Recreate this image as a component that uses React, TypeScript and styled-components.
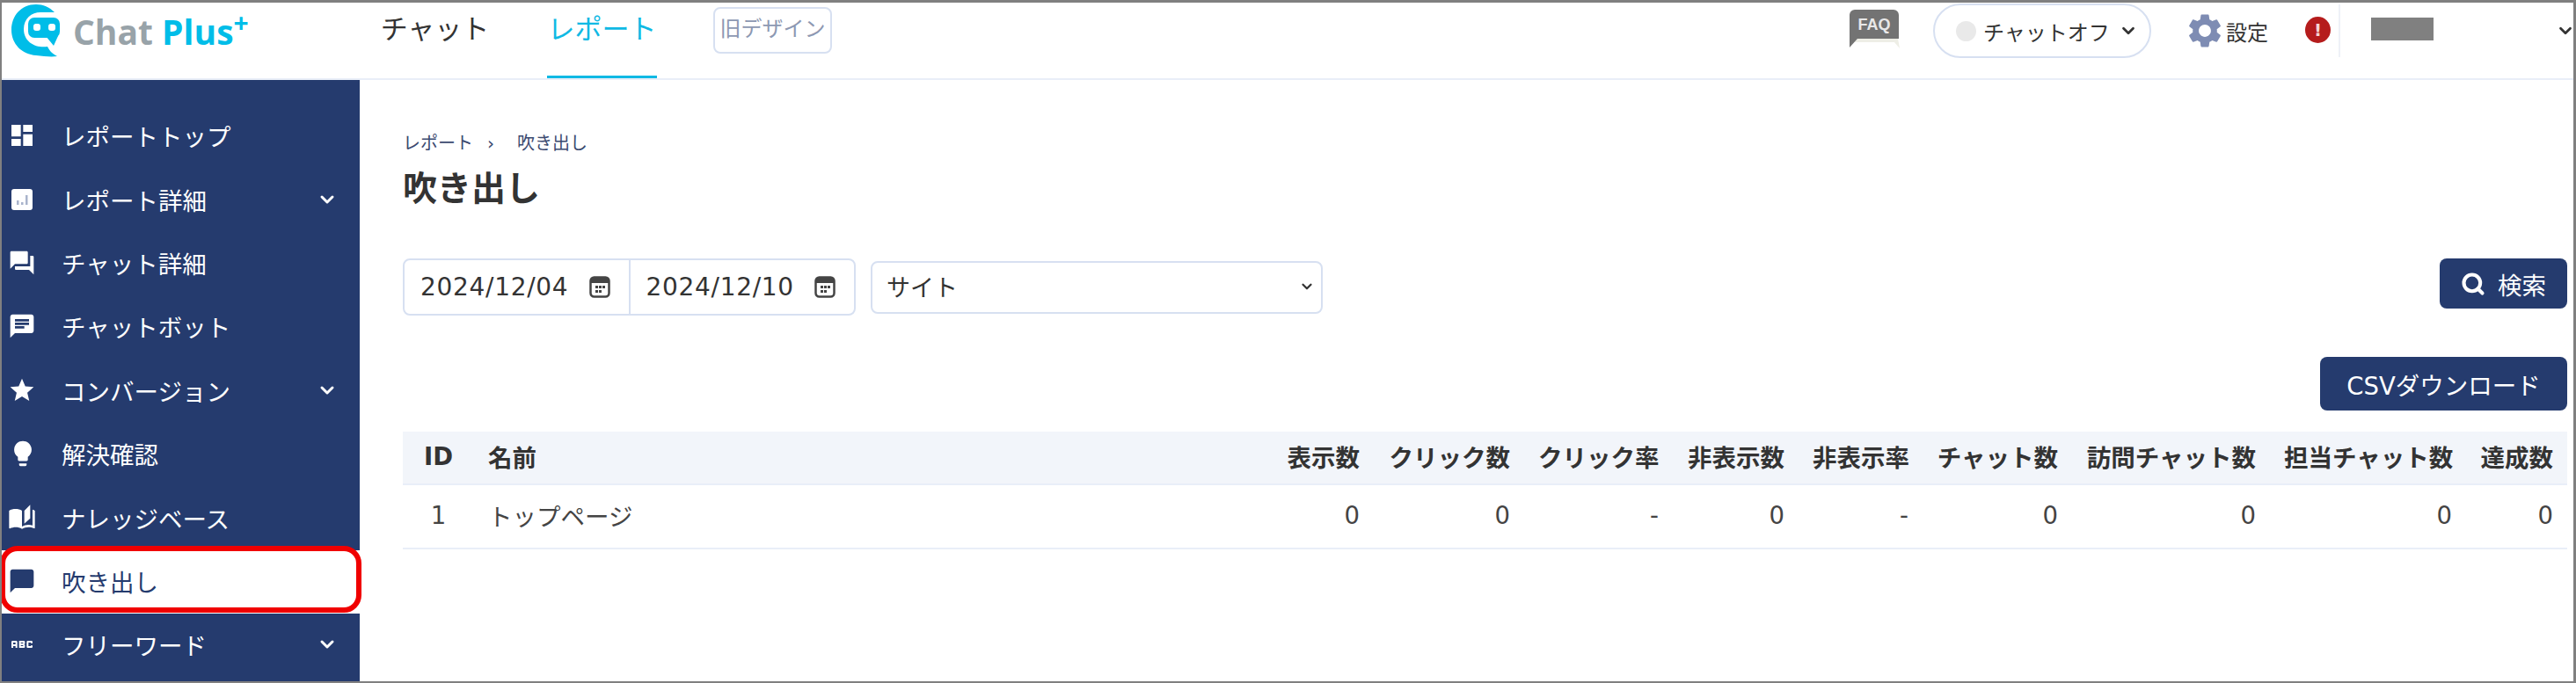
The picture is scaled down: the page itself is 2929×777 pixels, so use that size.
import React from 'react';
import styled, { createGlobalStyle } from 'styled-components';
import { ChevronDown, Search } from 'lucide-react';
import {
  MdAbc,
  MdAutoStories,
  MdChat,
  MdChatBubble,
  MdDashboard,
  MdForum,
  MdLightbulb,
  MdSettings,
  MdStar,
} from 'react-icons/md';

const GlobalStyle = createGlobalStyle`
  html, body {
    margin: 0;
    padding: 0;
    background: #fff;
  }
  body {
    font-family: "DejaVu Sans", "Noto Sans CJK JP", sans-serif;
    color: #333;
  }
  * {
    box-sizing: border-box;
  }
`;

const Frame = styled.div`
  width: 2929px;
  height: 777px;
  border: solid #808080;
  border-width: 3px 3px 2px 2px;
  display: flex;
  flex-direction: column;
  overflow: hidden;
`;

const Header = styled.header`
  flex: 0 0 88px;
  display: flex;
  align-items: flex-start;
  border-bottom: 2px solid #e9eef8;
  padding-left: 10px;
`;

const Logo = styled.div`
  width: 420px;
  display: flex;
  align-items: flex-start;
  gap: 15px;
  padding-top: 2px;
`;

const LogoText = styled.div`
  font-family: "Open Sans", sans-serif;
  font-weight: 700;
  font-size: 39px;
  line-height: 44px;
  margin-top: 9px;
  color: #98a3a9;
  white-space: nowrap;
  span {
    color: #00bde8;
  }
  sup {
    color: #00bde8;
    font-size: 30px;
    line-height: 0;
    vertical-align: 14px;
  }
`;

const NavItem = styled.div<{ $active?: boolean }>`
  height: 86px;
  width: 125px;
  margin-right: 65px;
  font-size: 31px;
  line-height: 60px;
  text-align: center;
  white-space: nowrap;
  color: ${(p) => (p.$active ? '#0fb9e4' : '#333')};
  border-bottom: 3px solid ${(p) => (p.$active ? '#0fb9e4' : 'transparent')};
`;

const OldDesign = styled.div`
  margin: 5px 0 0 -1px;
  width: 135px;
  height: 53px;
  border: 2px solid #d7e0f1;
  border-radius: 8px;
  font-size: 24px;
  line-height: 47px;
  text-align: center;
  white-space: nowrap;
  color: #8d98b2;
`;

const HeaderRight = styled.div`
  margin-left: auto;
  display: flex;
  align-items: flex-start;
`;

const FaqBadge = styled.svg`
  margin: 8px 38px 0 0;
`;

const StatusPill = styled.div`
  width: 248px;
  height: 62px;
  margin: 1px 41px 0 0;
  border: 2px solid #d7e0f1;
  border-radius: 31px;
  padding-left: 24px;
  display: flex;
  align-items: center;
  gap: 8px;
  font-size: 24px;
  white-space: nowrap;
  color: #333;
  svg {
    margin-left: 2px;
  }
`;

const StatusDot = styled.span`
  width: 23px;
  height: 23px;
  border-radius: 50%;
  background: #e9e9e9;
`;

const SettingLink = styled.div`
  display: flex;
  align-items: center;
  height: 48px;
  margin: 8px 42px 0 0;
  font-size: 24px;
  white-space: nowrap;
  color: #333;
  svg {
    color: #7e8cb3;
    margin: 0 1px 0 -3px;
  }
`;

const AlertMark = styled.span`
  width: 29px;
  height: 30px;
  margin: 16px 9px 0 0;
  border-radius: 50%;
  background: #b51c1c;
  color: #f5d5d5;
  font-size: 20px;
  font-weight: 700;
  line-height: 30px;
  text-align: center;
`;

const UserMenu = styled.div`
  width: 267px;
  height: 60px;
  margin-top: 2px;
  border-left: 2px solid #eef1f7;
  padding-left: 35px;
  display: flex;
  align-items: flex-start;
  justify-content: space-between;
  svg {
    margin: 19px -2px 0 0;
    color: #333;
  }
`;

const MaskedName = styled.div`
  width: 71px;
  height: 26px;
  margin-top: 15px;
  background: #808080;
`;

const Body = styled.div`
  flex: 1;
  display: flex;
  min-height: 0;
`;

const Sidebar = styled.nav`
  flex: 0 0 407px;
  background: #253b6e;
  padding-top: 28px;
`;

const SideRow = styled.div<{ $selected?: boolean }>`
  position: relative;
  height: 72.4px;
  padding: 0 25px 2px 7px;
  display: flex;
  align-items: center;
  font-size: 27.5px;
  white-space: nowrap;
  background: ${(p) => (p.$selected ? '#fff' : 'transparent')};
  color: ${(p) => (p.$selected ? '#253b6e' : '#fff')};
`;

const SideIcon = styled.span`
  flex: 0 0 61px;
  display: flex;
  align-items: center;
`;

const SideChevron = styled.span`
  margin-left: auto;
  display: flex;
`;

const RedMark = styled.div`
  position: absolute;
  left: -2px;
  right: -2px;
  top: -5px;
  bottom: 1px;
  border: 6px solid #f00000;
  border-radius: 20px;
`;

const Content = styled.main`
  flex: 1;
  padding: 58px 7px 0 49px;
`;

const Crumbs = styled.div`
  display: flex;
  gap: 16px;
  font-size: 20px;
  line-height: 28px;
  color: #3b4a70;
`;

const CrumbSeparator = styled.span`
  margin-right: 10px;
`;

const Title = styled.h1`
  margin: 12px 0 0;
  font-size: 39px;
  font-weight: 700;
  line-height: 52px;
  color: #333;
`;

const FilterRow = styled.div`
  margin-top: 53px;
  display: flex;
  align-items: flex-start;
`;

const DateGroup = styled.div`
  width: 515px;
  height: 65px;
  display: flex;
  border: 2px solid #d7e0f1;
  border-radius: 8px;
`;

const DateField = styled.div`
  flex: 1;
  display: flex;
  align-items: center;
  justify-content: space-between;
  padding: 0 21px 1px 18px;
  font-size: 28px;
  letter-spacing: 0.7px;
  & + & {
    border-left: 2px solid #d7e0f1;
  }
`;

const SiteSelect = styled.div`
  width: 514px;
  height: 60px;
  margin: 3px 0 0 17px;
  border: 2px solid #d7e0f1;
  border-radius: 8px;
  padding: 0 7px 3px 16px;
  display: flex;
  align-items: center;
  justify-content: space-between;
  font-size: 27px;
  svg {
    color: #333;
  }
`;

const ActionButton = styled.button`
  display: flex;
  align-items: center;
  justify-content: center;
  gap: 14px;
  border: 0;
  border-radius: 8px;
  background: #253b6e;
  color: #fff;
  font-family: inherit;
  font-size: 27.5px;
  white-space: nowrap;
`;

const SearchButton = styled(ActionButton)`
  width: 145px;
  height: 57px;
  margin-left: auto;
`;

const CsvRow = styled.div`
  margin-top: 47px;
  display: flex;
  justify-content: flex-end;
`;

const CsvButton = styled(ActionButton)`
  width: 281px;
  height: 61px;
`;

const ReportTable = styled.table`
  width: 2461px;
  margin-top: 24px;
  border-collapse: collapse;
  table-layout: fixed;
`;

const Col = styled.col<{ $w: number }>`
  width: ${(p) => p.$w}px;
`;

const HeadCell = styled.th<{ $align?: string }>`
  height: 60px;
  padding: 0 16px 3px;
  background: #f2f5fa;
  border-bottom: 2px solid #e9eef8;
  font-size: 27.5px;
  font-weight: 700;
  white-space: nowrap;
  color: #333;
  text-align: ${(p) => p.$align || 'right'};
`;

const DataCell = styled.td<{ $align?: string }>`
  height: 73px;
  padding: 0 16px 3px;
  border-bottom: 2px solid #e9eef8;
  font-size: 27.5px;
  white-space: nowrap;
  color: #444;
  text-align: ${(p) => p.$align || 'right'};
`;

const iconProps = { size: 32 };

const ReportIcon = () => (
  <svg width="32" height="32" viewBox="0 0 32 32">
    <rect x="4" y="4" width="24" height="24" rx="3" fill="#fff" />
    <g fill="#a9b4cc">
      <rect x="10" y="17" width="2.5" height="5" />
      <rect x="15" y="19" width="2.5" height="3" />
      <rect x="20" y="11" width="2.5" height="11" />
    </g>
  </svg>
);

const sideItems = [
  { label: 'レポートトップ', icon: <MdDashboard {...iconProps} /> },
  { label: 'レポート詳細', icon: <ReportIcon />, more: true },
  { label: 'チャット詳細', icon: <MdForum {...iconProps} /> },
  { label: 'チャットボット', icon: <MdChat {...iconProps} /> },
  { label: 'コンバージョン', icon: <MdStar {...iconProps} />, more: true },
  { label: '解決確認', icon: <MdLightbulb size={34} /> },
  { label: 'ナレッジベース', icon: <MdAutoStories {...iconProps} /> },
  { label: '吹き出し', icon: <MdChatBubble {...iconProps} />, selected: true },
  { label: 'フリーワード', icon: <MdAbc {...iconProps} />, more: true },
];

const columns = [
  { label: '表示数', width: 117, value: '0' },
  { label: 'クリック数', width: 171, value: '0' },
  { label: 'クリック率', width: 169, value: '-' },
  { label: '非表示数', width: 143, value: '0' },
  { label: '非表示率', width: 141, value: '-' },
  { label: 'チャット数', width: 170, value: '0' },
  { label: '訪問チャット数', width: 225, value: '0' },
  { label: '担当チャット数', width: 223, value: '0' },
  { label: '達成数', width: 115, value: '0' },
];

const LogoMark = () => (
  <svg width="56" height="60" viewBox="0 0 56 60">
    <path
      d="M50 9C44 3 37 0 29 0 12 0 1 13 1 29c0 16 12 28 28 29 9 1 17 2 24 1-6-3-9-7-11-11-12 2-27-4-27-20 0-12 9-19 19-19 6 0 11 0 16 0z"
      fill="#00bde8"
    />
    <rect x="20" y="15" width="36" height="23" rx="7" fill="#00bde8" />
    <path d="M40 36l9 11 5-11z" fill="#00bde8" />
    <rect x="26" y="22" width="8" height="8" rx="3" fill="#fff" />
    <rect x="43" y="22" width="8" height="8" rx="3" fill="#fff" />
  </svg>
);

const FaqIcon = () => (
  <FaqBadge width="58" height="46" viewBox="0 0 58 46">
    <path d="M10 33h46l2 11-6-7H6z" fill="#eeeee6" />
    <path d="M7 0h44a6 6 0 0 1 6 6v27H10L1 43V6a6 6 0 0 1 6-6z" fill="#737373" />
    <text
      x="29"
      y="23"
      textAnchor="middle"
      fontSize="18"
      fontWeight="700"
      fontFamily="Liberation Sans, sans-serif"
      fill="#e8e8e8"
    >
      FAQ
    </text>
  </FaqBadge>
);

const CalendarIcon = () => (
  <svg width="24" height="25" viewBox="0 0 24 25">
    <rect x="1.5" y="1.5" width="21" height="22" rx="4" fill="none" stroke="#444" strokeWidth="2.5" />
    <rect x="2" y="2" width="20" height="6" fill="#444" />
    <g fill="#444">
      <rect x="7" y="11" width="3" height="3" />
      <rect x="11" y="11" width="3" height="3" />
      <rect x="15" y="11" width="3" height="3" />
      <rect x="7" y="16" width="3" height="3" />
      <rect x="11" y="16" width="3" height="3" />
    </g>
  </svg>
);

export default function App() {
  return (
    <>
      <GlobalStyle />
      <Frame>
        <Header>
          <Logo>
            <LogoMark />
            <LogoText>
              Chat <span>Plus</span>
              <sup>+</sup>
            </LogoText>
          </Logo>
          <NavItem>チャット</NavItem>
          <NavItem $active>レポート</NavItem>
          <OldDesign>旧デザイン</OldDesign>
          <HeaderRight>
            <FaqIcon />
            <StatusPill>
              <StatusDot />
              チャットオフ
              <ChevronDown size={22} strokeWidth={3} />
            </StatusPill>
            <SettingLink>
              <MdSettings size={46} />
              設定
            </SettingLink>
            <AlertMark>!</AlertMark>
            <UserMenu>
              <MaskedName />
              <ChevronDown size={22} strokeWidth={3} />
            </UserMenu>
          </HeaderRight>
        </Header>
        <Body>
          <Sidebar>
            {sideItems.map((item) => (
              <SideRow key={item.label} $selected={item.selected}>
                <SideIcon>{item.icon}</SideIcon>
                {item.label}
                {item.more && (
                  <SideChevron>
                    <ChevronDown size={24} strokeWidth={3} />
                  </SideChevron>
                )}
                {item.selected && <RedMark />}
              </SideRow>
            ))}
          </Sidebar>
          <Content>
            <Crumbs>
              <span>レポート</span>
              <CrumbSeparator>›</CrumbSeparator>
              <span>吹き出し</span>
            </Crumbs>
            <Title>吹き出し</Title>
            <FilterRow>
              <DateGroup>
                <DateField>
                  2024/12/04
                  <CalendarIcon />
                </DateField>
                <DateField>
                  2024/12/10
                  <CalendarIcon />
                </DateField>
              </DateGroup>
              <SiteSelect>
                サイト
                <ChevronDown size={18} strokeWidth={3} />
              </SiteSelect>
              <SearchButton>
                <Search size={28} strokeWidth={3.5} />
                検索
              </SearchButton>
            </FilterRow>
            <CsvRow>
              <CsvButton>CSVダウンロード</CsvButton>
            </CsvRow>
            <ReportTable>
              <colgroup>
                <Col $w={81} />
                <Col $w={906} />
                {columns.map((c) => (
                  <Col key={c.label} $w={c.width} />
                ))}
              </colgroup>
              <thead>
                <tr>
                  <HeadCell $align="center">ID</HeadCell>
                  <HeadCell $align="left">名前</HeadCell>
                  {columns.map((c) => (
                    <HeadCell key={c.label}>{c.label}</HeadCell>
                  ))}
                </tr>
              </thead>
              <tbody>
                <tr>
                  <DataCell $align="center">1</DataCell>
                  <DataCell $align="left">トップページ</DataCell>
                  {columns.map((c) => (
                    <DataCell key={c.label}>{c.value}</DataCell>
                  ))}
                </tr>
              </tbody>
            </ReportTable>
          </Content>
        </Body>
      </Frame>
    </>
  );
}
